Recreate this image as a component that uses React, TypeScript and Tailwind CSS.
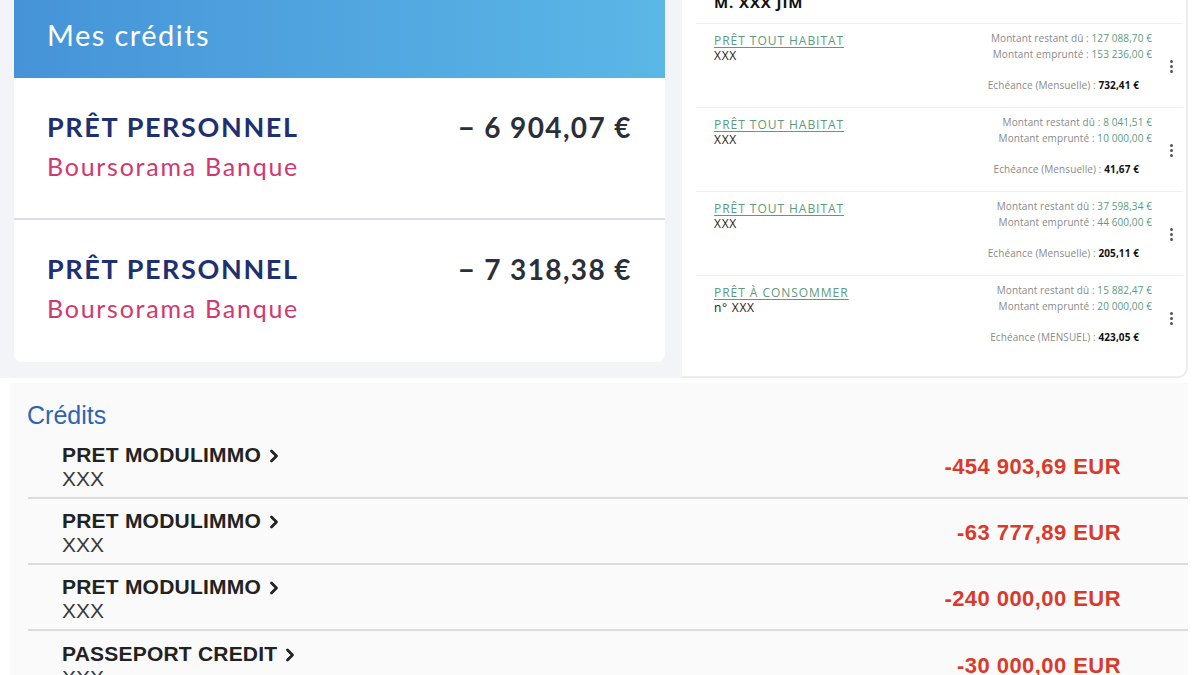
import { Fragment } from 'react'

const perso = [
  { title: 'PRÊT PERSONNEL', bank: 'Boursorama Banque', amount: '− 6 904,07 €' },
  { title: 'PRÊT PERSONNEL', bank: 'Boursorama Banque', amount: '− 7 318,38 €' },
]

const habitat = [
  { title: 'PRÊT TOUT HABITAT', ref: 'XXX', restant: '127 088,70 €', emprunte: '153 236,00 €', label: 'Echéance (Mensuelle)', echeance: '732,41 €' },
  { title: 'PRÊT TOUT HABITAT', ref: 'XXX', restant: '8 041,51 €', emprunte: '10 000,00 €', label: 'Echéance (Mensuelle)', echeance: '41,67 €' },
  { title: 'PRÊT TOUT HABITAT', ref: 'XXX', restant: '37 598,34 €', emprunte: '44 600,00 €', label: 'Echéance (Mensuelle)', echeance: '205,11 €' },
  { title: 'PRÊT À CONSOMMER', ref: 'n° XXX', restant: '15 882,47 €', emprunte: '20 000,00 €', label: 'Echéance (MENSUEL)', echeance: '423,05 €' },
]

const credits = [
  { title: 'PRET MODULIMMO', ref: 'XXX', amount: '-454 903,69 EUR' },
  { title: 'PRET MODULIMMO', ref: 'XXX', amount: '-63 777,89 EUR' },
  { title: 'PRET MODULIMMO', ref: 'XXX', amount: '-240 000,00 EUR' },
  { title: 'PASSEPORT CREDIT', ref: 'XXX', amount: '-30 000,00 EUR' },
]

function Kebab() {
  return (
    <div className="flex flex-col items-center gap-[2px]">
      <span className="h-[3px] w-[3px] rounded-full bg-[#555]" />
      <span className="h-[3px] w-[3px] rounded-full bg-[#555]" />
      <span className="h-[3px] w-[3px] rounded-full bg-[#555]" />
    </div>
  )
}

function Chevron() {
  return (
    <svg width="10" height="14" viewBox="0 0 10 14" className="ml-[8px] mt-[1px]">
      <path d="M2.5 2 L7.5 7 L2.5 12" fill="none" stroke="#222" strokeWidth="2.8" strokeLinecap="round" strokeLinejoin="round" />
    </svg>
  )
}

export default function App() {
  return (
    <div className="flex h-[675px] w-[1200px] flex-col overflow-hidden bg-white">
      <div className="flex h-[378px] shrink-0">
        {/* Boursorama */}
        <section className="w-[682px] bg-[#f2f4f8] pb-[16px] pl-[14px] pr-[17px] font-['Lato',sans-serif]">
          <div className="h-full overflow-hidden rounded-b-[8px] bg-white">
            <div className="flex h-[78px] items-center bg-gradient-to-r from-[#4693d8] to-[#5bb7e6] pb-[8px] pl-[33px]">
              <h1 className="text-[29px] tracking-[0.05em] text-white">Mes crédits</h1>
            </div>
            {perso.map((p, i) => (
              <div
                key={i}
                className={
                  'flex h-[142px] items-start justify-between pl-[33px] pr-[33px] pt-[32px] ' +
                  (i === 0 ? 'border-b-2 border-[#d8dee8]' : '')
                }
              >
                <div className="flex flex-col">
                  <span className="text-[27px] leading-[34px] font-bold tracking-[0.06em] text-[#1f3070]">{p.title}</span>
                  <span className="mt-[5px] text-[25px] leading-[34px] tracking-[0.07em] text-[#d2386f]">{p.bank}</span>
                </div>
                <span className="text-[28px] leading-[34px] font-bold tracking-[0.05em] text-[#2b2f38]">{p.amount}</span>
              </div>
            ))}
          </div>
        </section>

        {/* Crédit Agricole style list */}
        <section className="w-[506px] rounded-br-[10px] border-r-2 border-b-2 border-[#ececec] bg-white font-['Open_Sans',sans-serif]">
          <div className="-mt-[9px] h-[32px] pl-[32px] text-[15px] font-bold tracking-[0.06em] text-[#111]">M. XXX JIM</div>
          <div className="ml-[14px] mr-[3px]">
            {habitat.map((h, i) => (
              <div key={i} className="flex h-[84px] border-t border-[#efefef]">
                <div className="flex flex-1 flex-col pl-[18px] pt-[9px]">
                  <span className="text-[12px] leading-[16px] tracking-[0.08em] text-[#5b9a80] underline underline-offset-2">
                    {h.title}
                  </span>
                  <span className="text-[12px] leading-[14px] tracking-[0.06em] text-[#222]">{h.ref}</span>
                </div>
                <div className="mr-[7px] flex flex-col items-end pt-[7px] text-[10px] leading-[14px] tracking-[0.01em] text-[#8a8a8a]">
                  <span>
                    Montant restant dû : <span className="text-[#5b9a80]">{h.restant}</span>
                  </span>
                  <span className="mt-[2px]">
                    Montant emprunté : <span className="text-[#5b9a80]">{h.emprunte}</span>
                  </span>
                  <span className="mr-[13px] mt-[17px]">
                    {h.label} : <span className="font-bold text-[#111]">{h.echeance}</span>
                  </span>
                </div>
                <div className="flex w-[24px] items-center justify-center pt-[2px]">
                  <Kebab />
                </div>
              </div>
            ))}
          </div>
        </section>
      </div>

      {/* iOS style credits */}
      <section className="ml-[10px] mt-[5px] w-[1178px] flex-1 bg-[#fafafa] font-['Liberation_Sans',sans-serif]">
        <h2 className="flex h-[50px] items-center pl-[17px] pt-[16px] text-[25px] text-[#2d63b5]">Crédits</h2>
        <div className="ml-[18px]">
          {credits.map((c, i) => (
            <Fragment key={i}>
              <div className={'flex h-[66px] items-center justify-between pl-[34px] pr-[67px] ' + (i < 3 ? 'border-b-2 border-[#dcdcdc]' : '')}>
                <div className="flex flex-col pt-[4px]">
                  <span className="flex items-center text-[21px] leading-[24px] font-bold tracking-[0.01em] text-[#222]">
                    {c.title}
                    <Chevron />
                  </span>
                  <span className="text-[21px] leading-[24px] text-[#3a3a3a]">{c.ref}</span>
                </div>
                <span className="pt-[2px] text-[22px] font-bold tracking-[0.02em] text-[#d93a2b]">{c.amount}</span>
              </div>
            </Fragment>
          ))}
        </div>
      </section>
    </div>
  )
}
